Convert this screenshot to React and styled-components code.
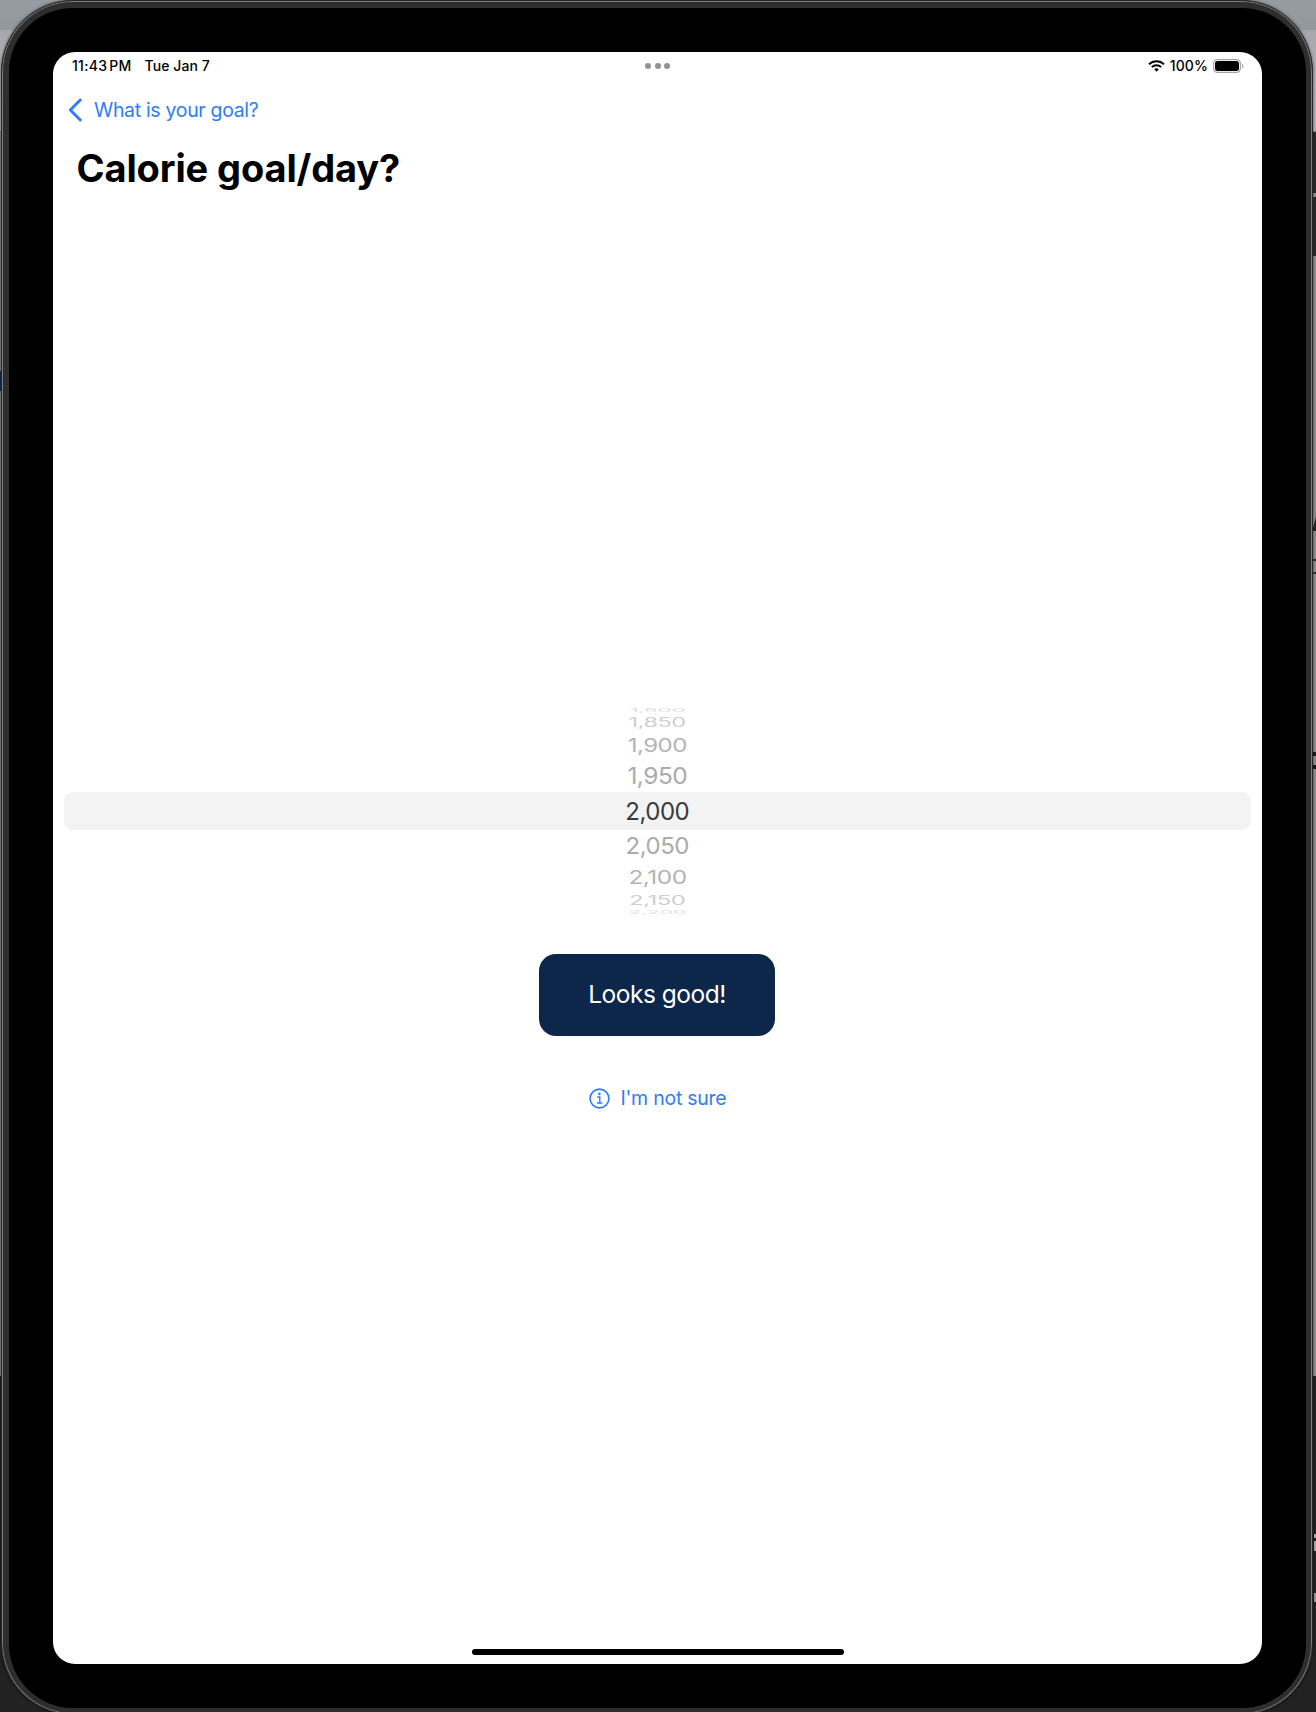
import React from "react";
import styled, { createGlobalStyle } from "styled-components";

const Global = createGlobalStyle`
  *{box-sizing:border-box}
  body{margin:0;background:#222;overflow:hidden;font-family:Inter,"Liberation Sans",sans-serif}
`;
const Backdrop = styled.div`
  width:1316px;height:1712px;overflow:hidden;padding-left:1px;
  background:
    linear-gradient(#969ca2,#90989e) 0 0/100% 30px no-repeat,
    linear-gradient(#a8a8ac,#b8b8bd) 0 30px/100% 101px no-repeat,
    linear-gradient(#17305a,#17305a) 0 371px/1px 20px no-repeat,
    linear-gradient(#2b2b2b,#2b2b2b) 1313px 132px/3px 61px no-repeat,
    linear-gradient(#2b2b2b,#2b2b2b) 1313px 197px/3px 59px no-repeat,
    linear-gradient(105deg,transparent 40%,#222 60%) 1313px 514px/3px 17px no-repeat,
    linear-gradient(#333,#333) 1313px 559px/3px 2px no-repeat,
    linear-gradient(#333,#333) 1313px 572px/3px 2px no-repeat,
    linear-gradient(#1a1a1a,#1a1a1a) 1313px 752px/3px 4px no-repeat,
    linear-gradient(#1a1a1a,#1a1a1a) 1313px 765px/3px 4px no-repeat,
    linear-gradient(#999,#999) 1314px 1593px/2px 9px no-repeat,
    linear-gradient(#aaa,#aaa) 1314px 1534px/2px 4px no-repeat,
    linear-gradient(#aaa,#aaa) 1314px 1541px/2px 10px no-repeat,
    linear-gradient(#8f8f8f 0 1376px,#222 1376px);
`;
const Device = styled.div`
  width:1312px;height:1715px;border-radius:72px;background:#2e2e2e;
  border:1px solid #262626;box-shadow:inset 0 0 0 1px #7c7c7c,0 0 3px rgba(0,0,0,.6);padding:6.5px 6px 6px 6.5px;
`;
const Bezel = styled.div`
  height:1700px;border-radius:64px;background:#000;padding:44.5px 44px 44px 44.5px;
`;
const Screen = styled.main`
  height:1612px;border-radius:22px;background:#fff;display:flex;flex-direction:column;color:#000;overflow:hidden;
`;
const StatusBar = styled.header`
  display:grid;grid-template-columns:1fr auto 1fr;align-items:center;height:28px;padding:0 18.5px 0 19px;
  font-size:14px;font-weight:500;line-height:20px;
`;
const Clock = styled.div`display:flex;gap:13px;white-space:nowrap;`;
const StatusText = styled.span`letter-spacing:${p => p.$ls || 0}px;word-spacing:${p => p.$ws || 0}px;`;
const Dots = styled.div`display:flex;gap:3.5px;`;
const Dot = styled.i`width:6px;height:6px;border-radius:50%;background:#929292;`;
const Indicators = styled.div`display:flex;justify-content:flex-end;align-items:center;gap:4.5px;`;
const Back = styled.button`
  display:flex;align-items:center;gap:12px;border:0;background:none;padding:0 0 0 15px;margin-top:18px;height:24px;
  color:#2f7df6;font:400 19.5px/24px Inter,sans-serif;letter-spacing:-.32px;
`;
const BackLabel = styled.span`padding-bottom:1px;`;
const Title = styled.h1`margin:23px 0 0 23.5px;font-size:38px;line-height:46px;font-weight:700;letter-spacing:-.12px;`;
const Picker = styled.div`
  margin:512px 11px 0 10.5px;height:216px;display:grid;align-content:start;justify-items:center;
`;
const Band = styled.div`grid-area:1/1;width:100%;height:38px;margin-top:88.5px;border-radius:9px;background:#f3f3f3;`;
const Value = styled.div`
  grid-area:1/1;height:30px;line-height:30px;font-size:24px;letter-spacing:-.5px;white-space:nowrap;
  margin-top:${p => p.$y}px;color:${p => p.$c};transform:scale(${p => p.$sx},${p => p.$sy});
`;
const Confirm = styled.button`
  align-self:center;width:236px;height:82px;margin:34.5px 1px 0 0;border:0;border-radius:17px;background:#0d274a;
  color:#fff;font:400 24.5px/30px Inter,sans-serif;letter-spacing:-.5px;padding:0 0 1px;
`;
const Help = styled.button`
  display:flex;align-items:center;align-self:center;gap:11px;margin-top:49.5px;height:26px;border:0;background:none;padding:0;
  color:#2f7df6;font:400 19.5px/26px Inter,sans-serif;letter-spacing:-.25px;
`;
const HomeBar = styled.div`width:372px;height:6px;border-radius:3px;background:#000;margin:auto auto 9px;`;

const values = [
  ["1,800", 5, "#dedede", 0.95, 0.22],
  ["1,850", 18, "#cecece", 0.98, 0.52],
  ["1,900", 41, "#b4b4b4", 1, 0.79],
  ["1,950", 71, "#ababab", 1.02, 0.97],
  ["2,000", 107, "#3a3a3a", 1, 1.02],
  ["2,050", 141, "#ababab", 1, 0.97],
  ["2,100", 173, "#b4b4b4", 1.02, 0.79],
  ["2,150", 196, "#cecece", 1, 0.52],
  ["2,200", 207, "#e2e2e2", 0.905, 0.22],
];

const Wifi = () => (
  <svg width="17" height="12" viewBox="0 0 17 12" fill="none" stroke="#000" strokeWidth="2">
    <path d="M1 4.3a10.7 10.7 0 0 1 15 0M3.8 7.1a6.7 6.7 0 0 1 9.4 0" />
    <path d="M8.5 11.7 6.2 9.3a3.3 3.3 0 0 1 4.6 0Z" fill="#000" stroke="none" />
  </svg>
);
const Battery = () => (
  <svg width="31" height="14" viewBox="0 0 31 14">
    <rect x=".6" y=".6" width="26.8" height="12.8" rx="4" fill="none" stroke="#a5a5a5" strokeWidth="1.2" />
    <rect x="2" y="2" width="24" height="10" rx="2.7" />
    <path d="M29 4.7c2 .6 2 4 0 4.6Z" fill="#aaa" />
  </svg>
);

export default function App() {
  return (
    <Backdrop>
      <Global />
      <Device><Bezel><Screen>
        <StatusBar>
          <Clock><StatusText $ls={0.3} $ws={-2.2}>11:43 PM</StatusText><StatusText $ls={0.08}>Tue Jan 7</StatusText></Clock>
          <Dots><Dot /><Dot /><Dot /></Dots>
          <Indicators><Wifi /><StatusText $ls={0.1}>100%</StatusText><Battery /></Indicators>
        </StatusBar>
        <Back>
          <svg width="14" height="24" viewBox="0 0 14 24" fill="none" stroke="currentColor" strokeWidth="2.9" strokeLinecap="round" strokeLinejoin="round"><path d="M12.3 2 2.3 12l10 10" /></svg>
          <BackLabel>What is your goal?</BackLabel>
        </Back>
        <Title>Calorie goal/day?</Title>
        <Picker>
          <Band />
          {values.map(([t, y, c, sx, sy]) => <Value key={t} $y={y - 13} $c={c} $sx={sx} $sy={sy}>{t}</Value>)}
        </Picker>
        <Confirm>Looks good!</Confirm>
        <Help>
          <svg width="21" height="21" viewBox="0 0 21 21" fill="none" stroke="currentColor" strokeWidth="1.6"><circle cx="10.5" cy="10.5" r="9.4" /><path d="M8.2 9h2.6v5.8M7.9 15h5.5" strokeWidth="1.4" /><circle cx="10.4" cy="5.9" r="1.3" fill="currentColor" stroke="none" /></svg>
          <span>I'm not sure</span>
        </Help>
        <HomeBar />
      </Screen></Bezel></Device>
    </Backdrop>
  );
}
